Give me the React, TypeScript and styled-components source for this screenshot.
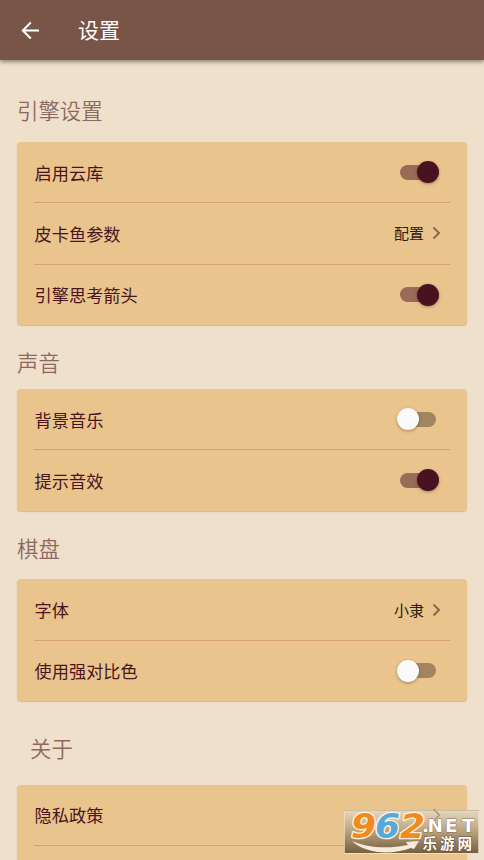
import React, { useState } from 'react';
import styled, { createGlobalStyle } from 'styled-components';

const Global = createGlobalStyle`
  * { box-sizing: border-box; }
  html, body { margin: 0; height: 100%; overflow: hidden; background: #eee0cb; }
  body { font-family: "Noto Sans CJK SC", sans-serif; }
`;

const Page = styled.div`
  position: relative;
  height: 860px;
  overflow: hidden;
  background: #eee0cb;
  display: flex;
  flex-direction: column;
`;

const AppBar = styled.header`
  height: 60px;
  flex: none;
  display: flex;
  align-items: center;
  gap: 38px;
  padding: 0 0 0 21px;
  background: #795547;
  box-shadow: 0 2px 4px rgba(60, 40, 25, 0.5);
`;

const BackButton = styled.button`
  display: flex;
  width: 19px;
  height: 19px;
  padding: 0;
  border: 0;
  background: none;
`;

const PageTitle = styled.h1`
  margin: 0 0 2px;
  font-size: 21px;
  line-height: 30px;
  font-weight: 400;
  color: #fff;
`;

const Content = styled.main`
  display: flex;
  flex-direction: column;
  padding: 0 17px;
`;

const SectionTitle = styled.h2<{ $top: number; $gap: number; $indent?: number }>`
  margin: ${p => p.$top}px 0 ${p => p.$gap}px ${p => p.$indent ?? 0}px;
  font-size: 21.4px;
  line-height: 30px;
  height: 30px;
  font-weight: 350;
  color: #8e6860;
`;

const Card = styled.section`
  padding: 0 17px;
  border-radius: 4px;
  background: #eac48d;
  box-shadow: 0 1px 1px rgba(110, 70, 20, 0.24);
`;

const Row = styled.div`
  height: 61.3px;
  display: flex;
  align-items: center;
  justify-content: space-between;
  padding: 0 9px 0 0.6px;
  border-bottom: 1px solid #d3a172;

  &:last-child {
    height: 60.4px;
    border-bottom: 0;
  }
`;

const Label = styled.span`
  font-size: 17.2px;
  line-height: 24px;
  padding-top: 1px;
  color: #481420;
`;

const Value = styled.span`
  display: flex;
  align-items: center;
  gap: 8px;
  font-size: 15px;
  line-height: 22px;
  color: #28200f;
`;

const Track = styled.button<{ $on: boolean }>`
  display: flex;
  align-items: center;
  justify-content: ${p => (p.$on ? 'flex-end' : 'flex-start')};
  width: 36px;
  height: 15px;
  margin-right: 5px;
  padding: 0;
  border: 0;
  border-radius: 8px;
  background: ${p => (p.$on ? '#996c57' : '#a1855f')};
`;

const Knob = styled.span<{ $on: boolean }>`
  flex: none;
  width: 22px;
  height: 22px;
  margin: ${p => (p.$on ? '0 -3px 0 0' : '0 0 0 -3px')};
  border-radius: 50%;
  background: ${p => (p.$on ? '#481220' : '#fafafa')};
  box-shadow: 0 1px 3px rgba(50, 25, 10, 0.4);
`;

const Watermark = styled.aside`
  position: absolute;
  left: 344px;
  top: 810px;
  width: 135px;
  height: 44px;
  border: 1px solid rgba(242, 228, 203, 0.7);
  background: linear-gradient(rgba(229, 215, 190, 0.95), rgba(188, 164, 128, 0.95) 45%, rgba(112, 91, 61, 0.96));

  svg { display: block; overflow: visible; }
`;

function Chevron() {
  return (
    <svg width="9" height="14" viewBox="0 0 9 14" fill="none">
      <path d="M1.5 1.5 7 7l-5.5 5.5" stroke="#94624e" strokeWidth="2" />
    </svg>
  );
}

function Switch({ initial }: { initial: boolean }) {
  const [on, setOn] = useState(initial);
  return (
    <Track $on={on} role="switch" aria-checked={on} onClick={() => setOn(!on)}>
      <Knob $on={on} />
    </Track>
  );
}

type Item = { label: string; on?: boolean; value?: string };
type Section = { title: string; top: number; gap: number; indent?: number; items: Item[] };

const sections: Section[] = [
  { title: '引擎设置', top: 35, gap: 17, items: [{ label: '启用云库', on: true }, { label: '皮卡鱼参数', value: '配置' }, { label: '引擎思考箭头', on: true }] },
  { title: '声音', top: 22, gap: 12, items: [{ label: '背景音乐', on: false }, { label: '提示音效', on: true }] },
  { title: '棋盘', top: 22, gap: 16.8, items: [{ label: '字体', value: '小隶' }, { label: '使用强对比色', on: false }] },
  { title: '关于', top: 31.5, gap: 22, indent: 13, items: [{ label: '隐私政策', value: '' }, { label: '' }] },
];

export default function App() {
  return (
    <>
      <Global />
      <Page>
        <AppBar>
          <BackButton aria-label="返回">
            <svg width="19" height="19" viewBox="0 0 19 19" fill="none" stroke="#fff" strokeWidth="2">
              <path d="M18 9.5H2M9.8 1.5 1.8 9.5l8 8" />
            </svg>
          </BackButton>
          <PageTitle>设置</PageTitle>
        </AppBar>
        <Content>
          {sections.map(s => (
            <React.Fragment key={s.title}>
              <SectionTitle $top={s.top} $gap={s.gap} $indent={s.indent}>{s.title}</SectionTitle>
              <Card>
                {s.items.map(item => (
                  <Row key={item.label}>
                    <Label>{item.label}</Label>
                    {item.on !== undefined && <Switch initial={item.on} />}
                    {item.value !== undefined && <Value>{item.value}<Chevron /></Value>}
                  </Row>
                ))}
              </Card>
            </React.Fragment>
          ))}
        </Content>
        <Watermark>
          <svg width="133" height="42" viewBox="345 811 133 42">
            <path d="m434 809.5 5.5 5.5-5.5 5.5" fill="none" stroke="#b19883" strokeWidth="1.6" />
            <g fontFamily="DejaVu Sans, sans-serif" fontWeight="700" paintOrder="stroke" strokeLinejoin="round">
              <g fontSize="33" fontStyle="italic" stroke="#fff4df" strokeWidth="2.6">
                <text x="351" y="838" textLength="25" lengthAdjust="spacingAndGlyphs" fill="#f28a1d">9</text>
                <text x="375" y="838" textLength="25" lengthAdjust="spacingAndGlyphs" fill="#56a9db">6</text>
                <text x="400" y="838" textLength="25" lengthAdjust="spacingAndGlyphs" fill="#f28a1d">2</text>
              </g>
              <text x="422 427.5 445 462" y="832" fontSize="18.5" fill="#fff" stroke="#85715a" strokeWidth="1">.NET</text>
            </g>
            <path d="M352 841c16 7 36 8 56 4l-2-3 13-1-5 8-3-1c-22 8-46 5-59-7Z" fill="#f4ebdc" />
            <text x="422.5 440 457.5" y="849" fontSize="14.5" fontWeight="700" fontFamily="Noto Sans CJK SC, sans-serif" fill="#fff" stroke="#675238" strokeWidth="1" paintOrder="stroke">乐游网</text>
          </svg>
        </Watermark>
      </Page>
    </>
  );
}
